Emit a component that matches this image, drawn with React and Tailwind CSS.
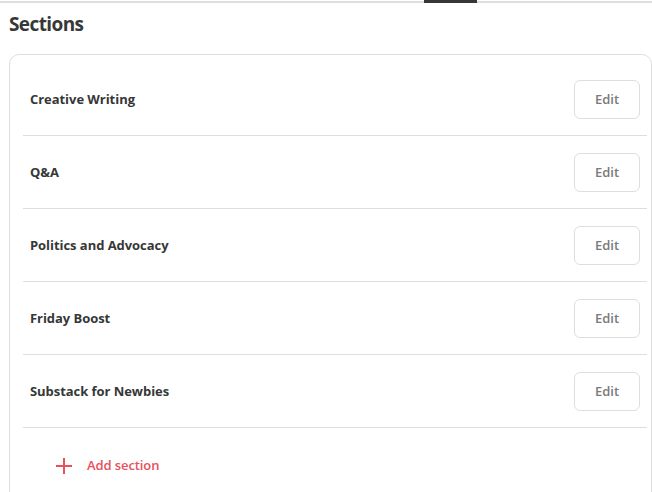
import React from "react";

const sections = ["Creative Writing", "Q&A", "Politics and Advocacy", "Friday Boost", "Substack for Newbies"];

export default function App() {
  return (
    <div className="h-[492px] w-[652px] overflow-hidden bg-white" style={{ fontFamily: '"Open Sans", "Noto Sans", sans-serif' }}>
      <div className="relative h-[3px] border-b-2 border-[#dedede]">
        <div className="absolute left-[424px] top-0 h-[3px] w-[53px] bg-[#363737]" />
      </div>
      <h1 className="mt-[9px] ml-[9px] text-[19px] font-bold leading-[24px] tracking-[-0.6px] text-[#363737]">Sections</h1>
      <div className="mt-[18px] ml-[9px] rounded-[10px] border border-[#dedede] pl-[13px] pr-[4px] pt-[8px]">
        {sections.map((s) => (
          <div key={s} className="flex h-[73px] items-center justify-between border-b border-[#dedede] pl-[7px] pr-[7px]">
            <span className="mt-[2px] text-[13px] font-bold tracking-[-0.05px] text-[#363737]">{s}</span>
            <button className="h-[39px] w-[66px] rounded-[6px] border border-[#dedede] bg-white pt-[2px] text-[13px] font-semibold text-[#7a7a7a]">
              Edit
            </button>
          </div>
        ))}
        <div className="flex h-[76px] items-center gap-[15px] pl-[33px]">
          <svg width="16" height="16" viewBox="0 0 16 16" className="text-[#e8505b]">
            <path d="M8 0v16M0 8h16" stroke="currentColor" strokeWidth="2" />
          </svg>
          <span className="text-[13px] font-semibold tracking-[-0.1px] text-[#e8505b]">Add section</span>
        </div>
      </div>
    </div>
  );
}
